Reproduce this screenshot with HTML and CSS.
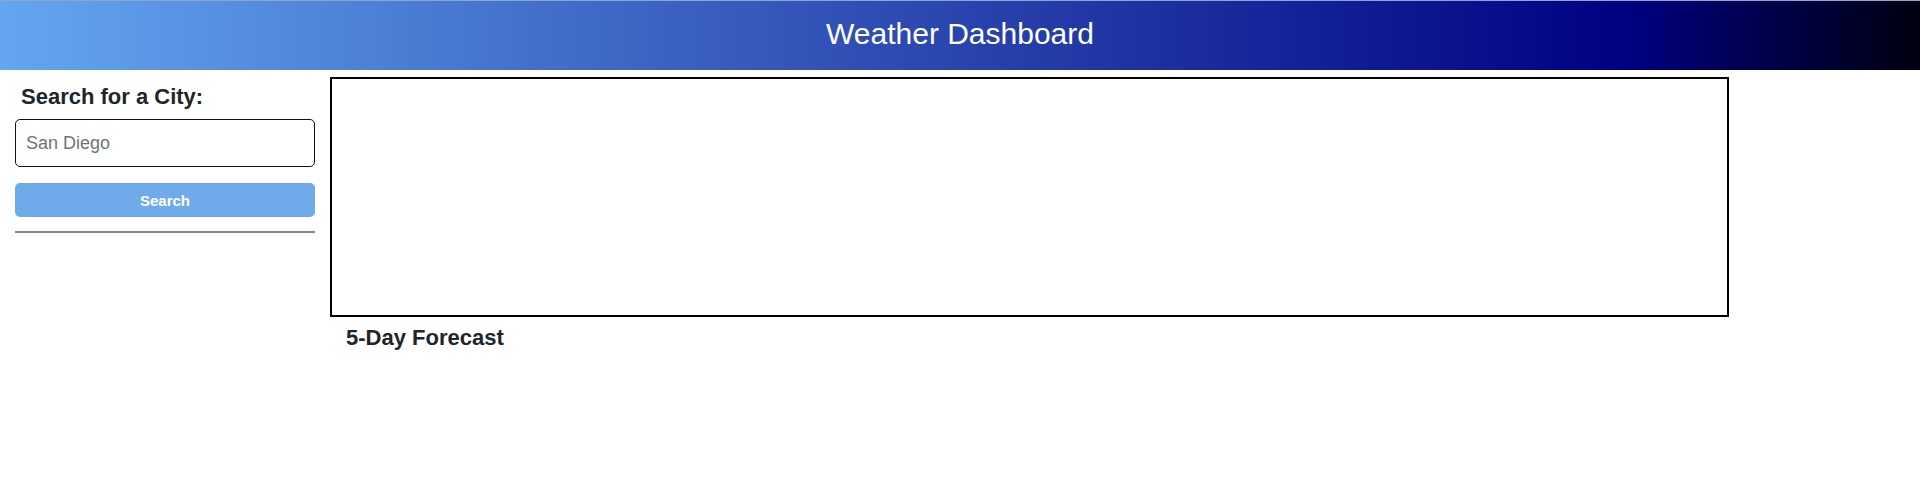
FILE: index.html
```html
<!DOCTYPE html>
<html lang="en">
<head>
<meta charset="utf-8">
<title>Weather Dashboard</title>
<link rel="stylesheet" href="styles.css">
</head>
<body>
<header class="topbar">
  <h1 class="title">Weather Dashboard</h1>
</header>
<div class="content">
  <aside class="sidebar">
    <h2 class="side-heading">Search for a City:</h2>
    <input class="city-input" type="text" placeholder="San Diego">
    <button class="search-btn" type="button">Search</button>
    <hr class="divider">
  </aside>
  <main class="main">
    <section class="current"></section>
    <h2 class="forecast-heading">5-Day Forecast</h2>
  </main>
</div>
</body>
</html>
```
FILE: styles.css
```css
* { box-sizing: border-box; }

body {
  margin: 0;
  font-family: "Liberation Sans", Arial, sans-serif;
  color: #212529;
  background: #fff;
}

.topbar {
  height: 70px;
  border-top: 1px solid #8aa6cf;
  background: linear-gradient(90deg, #64a6f0 0%, #000080 85%, #000010 100%);
  display: flex;
  justify-content: center;
}

.title {
  margin: 0;
  font-size: 30px;
  font-weight: normal;
  line-height: 65px;
  color: #fff;
}

.content {
  display: flex;
  gap: 15px;
  padding: 0 15px;
}

.sidebar {
  width: 300px;
  flex: none;
  display: flex;
  flex-direction: column;
}

.side-heading {
  margin: 14px 0 0 6px;
  font-size: 22px;
  line-height: 26px;
  font-weight: bold;
}

.city-input {
  margin-top: 9px;
  width: 300px;
  height: 48px;
  border: 1px solid #111;
  border-radius: 5px;
  padding: 0 10px;
  font-family: "Liberation Sans", Arial, sans-serif;
  font-size: 18px;
  color: #212529;
}

.city-input::placeholder { color: #6c757d; }

.search-btn {
  margin-top: 16px;
  width: 300px;
  height: 34px;
  border: none;
  border-radius: 5px;
  background: #6faaeb;
  color: #fff;
  font-family: "Liberation Sans", Arial, sans-serif;
  font-size: 15px;
  font-weight: bold;
}

.divider {
  margin: 14px 0 0;
  width: 300px;
  border: none;
  height: 2px;
  background: #888;
}

.main {
  width: 1399px;
  flex: none;
}

.current {
  margin-top: 7px;
  height: 240px;
  border: 2px solid #000;
}

.forecast-heading {
  margin: 8px 0 0 16px;
  font-size: 22px;
  line-height: 26px;
  font-weight: bold;
}
```
